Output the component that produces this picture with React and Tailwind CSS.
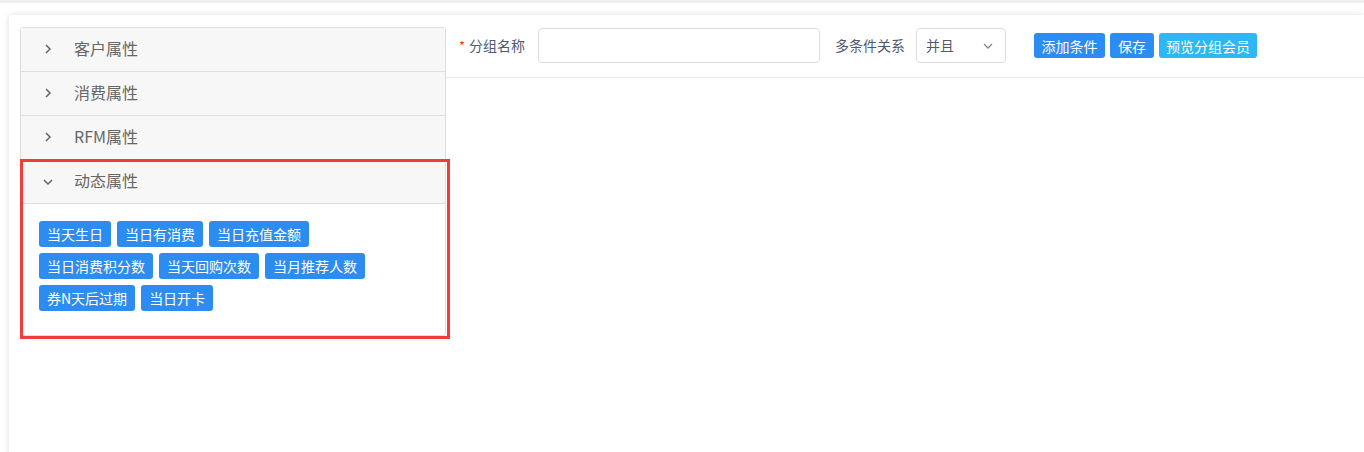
import React from "react"

const Chevron = ({ open }) => (
  <svg
    width="12"
    height="12"
    viewBox="0 0 12 12"
    fill="none"
    stroke="#666"
    strokeWidth="1.5"
    className={open ? "rotate-90" : ""}
  >
    <path d="M4 2 L8 6 L4 10" />
  </svg>
)

const groups = ["客户属性", "消费属性", "RFM属性"]

const tags = [
  "当天生日",
  "当日有消费",
  "当日充值金额",
  "当日消费积分数",
  "当天回购次数",
  "当月推荐人数",
  "券N天后过期",
  "当日开卡",
]

const App = () => {
  return (
    <div
      className="min-h-screen bg-white border-t-[3px] border-[#efefef] pt-[12px] pl-[9px] overflow-hidden"
      style={{ fontFamily: '"Noto Sans CJK SC", "Noto Sans", sans-serif' }}
    >
      <div className="flex bg-white h-[440px] rounded-tl-[3px] shadow-[0_0_6px_rgba(0,0,0,0.14)]">
        {/* left: attribute accordion */}
        <div className="pl-[11px] pt-[12px] w-[437px] shrink-0">
          <div className="border border-[#dcdee2] rounded-[3px] bg-white">
            {groups.map((g, i) => (
              <div
                key={g}
                className={
                  "h-[43px] flex items-center bg-[#f7f7f7] text-[16px] text-[#666] pb-[3px] " +
                  (i > 0 ? "border-t border-[#dcdee2] h-[44px]" : "")
                }
              >
                <span className="w-[53px] flex justify-center pt-[2px]">
                  <Chevron />
                </span>
                <span>{g}</span>
              </div>
            ))}
            <div className="relative border-t border-[#dcdee2]">
              <div className="h-[43px] flex items-center bg-[#f7f7f7] text-[16px] text-[#666] pb-[3px]">
                <span className="w-[53px] flex justify-center pt-[4px]">
                  <Chevron open />
                </span>
                <span>动态属性</span>
              </div>
              <div className="border-t border-[#dcdee2] pt-[17px] pl-[18px] pr-[44px] flex flex-wrap gap-x-[6px] gap-y-[6px] content-start h-[132px]">
                {tags.map((t) => (
                  <span
                    key={t}
                    className="h-[26px] px-[8px] flex items-center bg-[#2d8cf0] text-white text-[14px] rounded-[3px] leading-none"
                  >
                    {t}
                  </span>
                ))}
              </div>
              <div className="absolute -top-px -left-px -right-[5px] -bottom-[4px] border-[3px] border-[#f23c3c] pointer-events-none" />
            </div>
          </div>
        </div>

        {/* right: group form */}
        <div className="flex-1">
          <div className="flex items-center h-[63px] pt-[13px] pb-[14px] pl-[13px] border-b border-[#e8eaec] text-[14px] text-[#515a6e]">
            <span className="text-[#ed4014] mr-[4px] text-[13px]">*</span>
            <span>分组名称</span>
            <input
              className="ml-[13px] w-[282px] h-[35px] border border-[#dcdee2] rounded-[4px] px-[8px] outline-none"
              type="text"
            />
            <span className="ml-[15px]">多条件关系</span>
            <div className="ml-[11px] w-[90px] h-[35px] border border-[#dcdee2] rounded-[4px] flex items-center justify-between pl-[9px] pr-[11px] text-[#515a6e]">
              <span>并且</span>
              <svg width="12" height="12" viewBox="0 0 12 12" fill="none" stroke="#808695" strokeWidth="1.3">
                <path d="M2 4 L6 8 L10 4" />
              </svg>
            </div>
            <div className="ml-[28px] flex gap-[5px]">
              <button className="h-[25px] px-[7.5px] bg-[#2d8cf0] text-white text-[14px] rounded-[3px] leading-none">
                添加条件
              </button>
              <button className="h-[25px] px-[8px] bg-[#2d8cf0] text-white text-[14px] rounded-[3px] leading-none">
                保存
              </button>
              <button className="h-[25px] px-[7px] bg-[#2db7f5] text-white text-[14px] rounded-[3px] leading-none">
                预览分组会员
              </button>
            </div>
          </div>
        </div>
      </div>
    </div>
  )
}

export default App
